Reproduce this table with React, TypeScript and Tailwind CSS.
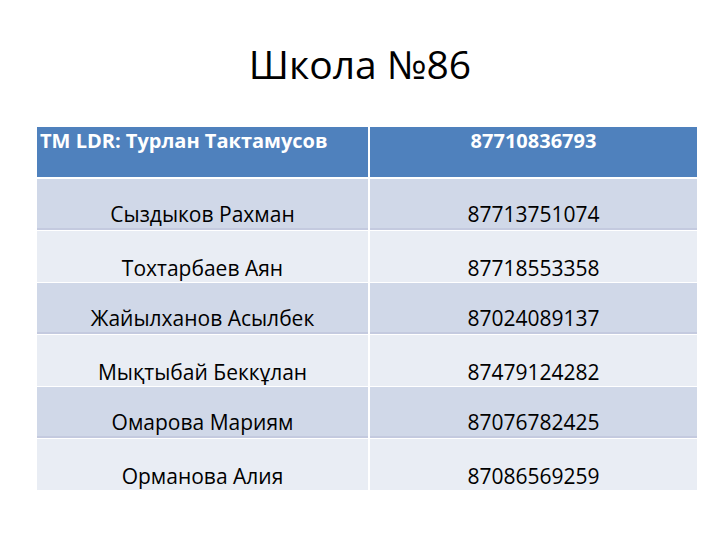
import React from "react";

const rows = [
  { name: "Сыздыков Рахман", phone: "87713751074" },
  { name: "Тохтарбаев Аян", phone: "87718553358" },
  { name: "Жайылханов Асылбек", phone: "87024089137" },
  { name: "Мықтыбай Беккұлан", phone: "87479124282" },
  { name: "Омарова Мариям", phone: "87076782425" },
  { name: "Орманова Алия", phone: "87086569259" },
];

export default function App() {
  return (
    <div className="w-[720px] h-[540px] bg-white font-['Open_Sans',sans-serif] text-black">
      {/* Title */}
      <div className="pt-[40px] h-[127px]">
        <h1 className="text-center text-[39px] leading-[48px] font-normal">Школа №86</h1>
      </div>

      {/* Table */}
      <div className="ml-[37px] w-[660px] flex flex-col gap-[1px] bg-white">
        <div className="grid grid-cols-[331px_327px] gap-x-[2px] h-[50px] mb-[1px]">
          <div className="bg-[#4f81bd] text-white font-bold text-[20px] leading-[24px] pl-[3px] pt-[2px]">
            TM LDR: Турлан Тактамусов
          </div>
          <div className="bg-[#4f81bd] text-white font-bold text-[20px] leading-[24px] text-center pt-[2px]">
            87710836793
          </div>
        </div>
        {rows.map((r, i) => {
          const dark = i % 2 === 0;
          const cell = dark
            ? "bg-[#d0d8e8] border-b-2 border-[#c4cadf]"
            : "bg-[#e9edf4]";
          return (
            <div key={r.phone} className="grid grid-cols-[331px_327px] gap-x-[2px] h-[51px]">
              <div className={`${cell} flex items-end justify-center pb-[2px] text-[21px] leading-[24px]`}>
                {r.name}
              </div>
              <div className={`${cell} flex items-end justify-center pb-[2px] text-[21px] leading-[24px]`}>
                {r.phone}
              </div>
            </div>
          );
        })}
      </div>
    </div>
  );
}
